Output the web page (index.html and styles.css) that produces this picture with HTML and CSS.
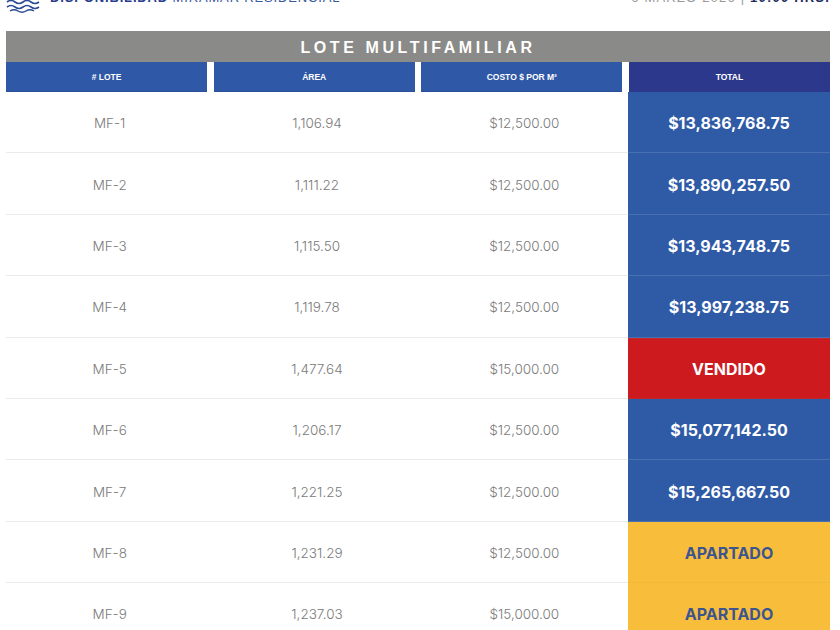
FILE: index.html
```html
<!DOCTYPE html>
<html lang="es">
<head>
<meta charset="utf-8">
<title>Disponibilidad Miramar Residencial</title>
<link rel="stylesheet" href="styles.css">
</head>
<body>
<div class="page">
  <header class="top">
    <div class="brand">
      <svg class="logo" width="34" height="14" viewBox="0 0 34 14">
        <path d="M1 3 Q5 0 9 3 T17 3 T25 3 T33 3" fill="none" stroke="#2a4a94" stroke-width="1.6"/>
        <path d="M1 8 Q5 5 9 8 T17 8 T25 8 T33 8" fill="none" stroke="#2a4a94" stroke-width="1.6"/>
        <path d="M4 12 Q8 9.5 12 12 T20 12 T28 12" fill="none" stroke="#2a4a94" stroke-width="1.4"/>
      </svg>
      <span class="brand-text"><b>DISPONIBILIDAD</b> MIRAMAR RESIDENCIAL</span>
    </div>
    <div class="date"><span class="date-light">6 MARZO 2026 |</span> <b>10:00 HRS.</b></div>
  </header>

  <div class="title">LOTE MULTIFAMILIAR</div>
  <div class="head">
    <div class="hcell"># LOTE</div>
    <div class="hcell">ÁREA</div>
    <div class="hcell">COSTO $ POR M²</div>
    <div class="hcell dark">TOTAL</div>
  </div>

  <div class="rows">
    <div class="row"><div class="cell">MF-1</div><div class="cell">1,106.94</div><div class="cell">$12,500.00</div><div class="total blue">$13,836,768.75</div></div>
    <div class="row"><div class="cell">MF-2</div><div class="cell">1,111.22</div><div class="cell">$12,500.00</div><div class="total blue">$13,890,257.50</div></div>
    <div class="row"><div class="cell">MF-3</div><div class="cell">1,115.50</div><div class="cell">$12,500.00</div><div class="total blue">$13,943,748.75</div></div>
    <div class="row"><div class="cell">MF-4</div><div class="cell">1,119.78</div><div class="cell">$12,500.00</div><div class="total blue">$13,997,238.75</div></div>
    <div class="row"><div class="cell">MF-5</div><div class="cell">1,477.64</div><div class="cell">$15,000.00</div><div class="total red">VENDIDO</div></div>
    <div class="row"><div class="cell">MF-6</div><div class="cell">1,206.17</div><div class="cell">$12,500.00</div><div class="total blue">$15,077,142.50</div></div>
    <div class="row"><div class="cell">MF-7</div><div class="cell">1,221.25</div><div class="cell">$12,500.00</div><div class="total blue">$15,265,667.50</div></div>
    <div class="row"><div class="cell">MF-8</div><div class="cell">1,231.29</div><div class="cell">$12,500.00</div><div class="total yellow">APARTADO</div></div>
    <div class="row"><div class="cell">MF-9</div><div class="cell">1,237.03</div><div class="cell">$15,000.00</div><div class="total yellow">APARTADO</div></div>
  </div>
</div>
</body>
</html>
```

FILE: styles.css
```css
html, body {
  margin: 0;
  padding: 0;
  background: #ffffff;
  overflow: hidden;
}
.page {
  width: 824px;
  margin: 0 0 0 6px;
  font-family: "Inter", "Liberation Sans", sans-serif;
}
.top {
  display: flex;
  justify-content: space-between;
  align-items: flex-end;
  height: 31px;
  margin-top: -26px;
  padding-bottom: 26px;
  box-sizing: content-box;
}
.brand {
  display: flex;
  align-items: flex-end;
  gap: 10px;
}
.logo {
  display: block;
  margin-bottom: -8px;
}
.brand-text {
  font-family: "Liberation Sans", sans-serif;
  font-size: 13px;
  letter-spacing: 0.85px;
  color: #3a5aa0;
  line-height: 13px;
  margin-bottom: 1px;
}
.brand-text b {
  color: #2a3d8c;
}
.date {
  font-family: "Liberation Sans", sans-serif;
  font-size: 13px;
  letter-spacing: 1.2px;
  line-height: 13px;
  color: #9a9a9a;
  margin-bottom: 1px;
}
.date b {
  color: #1d2b5e;
}
.title {
  height: 31px;
  background: #8a8a88;
  color: #ffffff;
  font-family: "Liberation Sans", sans-serif;
  font-weight: bold;
  font-size: 16px;
  letter-spacing: 3.6px;
  display: flex;
  align-items: center;
  justify-content: center;
  padding-top: 2px;
  box-sizing: border-box;
}
.head {
  display: grid;
  grid-template-columns: repeat(4, 1fr);
  column-gap: 6.5px;
  height: 30px;
}
.hcell {
  background: #2f58a6;
  color: #ffffff;
  font-family: "Liberation Sans", sans-serif;
  font-weight: bold;
  font-size: 8.5px;
  display: flex;
  align-items: center;
  justify-content: center;
  border-bottom: 1px solid #2a4f96;
}
.hcell.dark {
  background: #2b388c;
  border-bottom: none;
}
.rows {
  display: flex;
  flex-direction: column;
}
.row {
  display: grid;
  grid-template-columns: 1fr 1fr 1fr 202px;
  height: 61.4px;
  border-bottom: 1px solid #ebebeb;
  box-sizing: border-box;
}
.cell {
  display: flex;
  align-items: center;
  justify-content: center;
  font-size: 13.5px;
  font-weight: 300;
  color: #7a7a7a;
  padding-top: 2px;
}
.total {
  display: flex;
  align-items: center;
  justify-content: center;
  font-weight: 700;
  font-size: 16px;
  color: #ffffff;
  margin-bottom: -1px;
  padding-top: 2px;
}
.total.blue {
  background: #2f5aa6;
  border-bottom: 1px solid #4a70b4;
}
.total.red {
  background: #cc1a1f;
  border-top: 1px solid #c0282e;
  border-bottom: 1px solid #c0282e;
}
.total.yellow {
  background: #f8bd3b;
  color: #3c5590;
  border-bottom: 1px solid #f0b837;
}
```
